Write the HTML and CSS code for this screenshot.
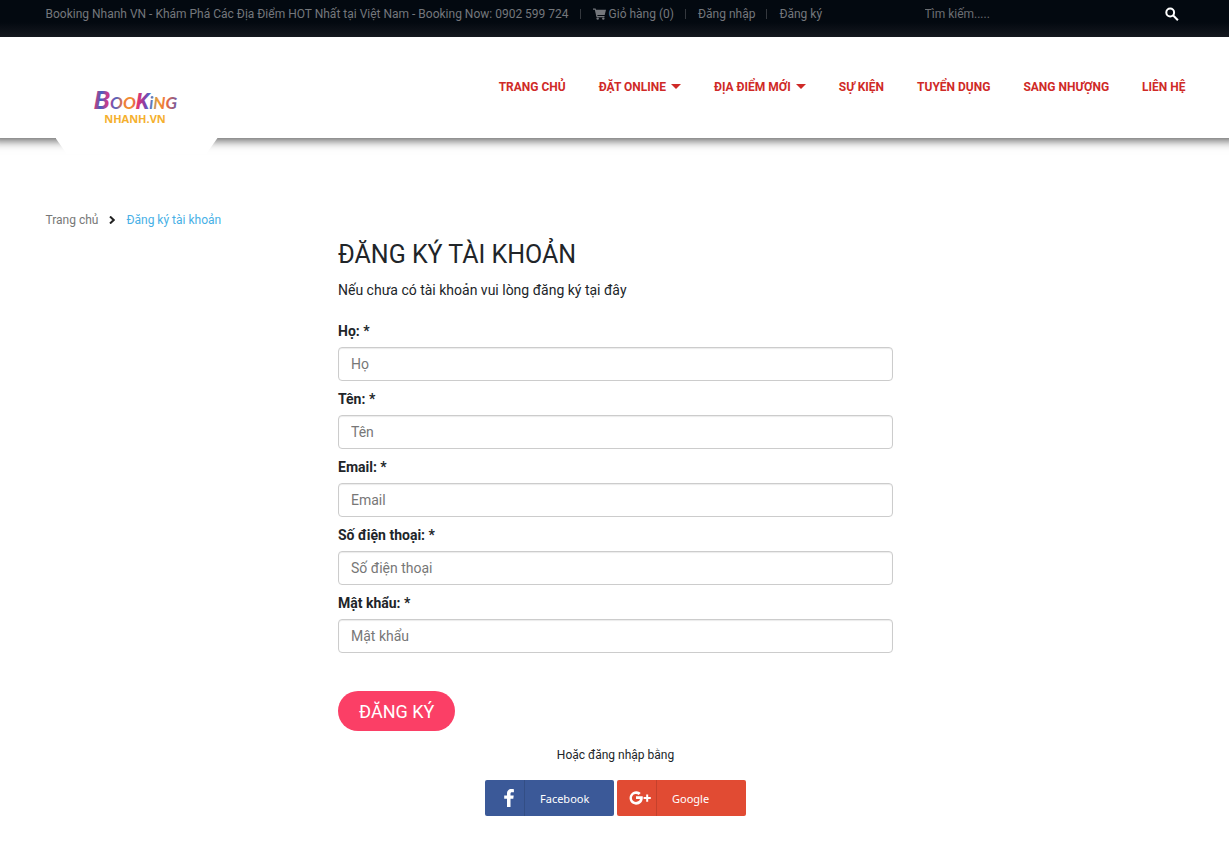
FILE: index.html
```html
<!DOCTYPE html>
<html lang="vi">
<head>
    <meta charset="UTF-8">
    <meta name="viewport" content="width=device-width, initial-scale=1.0">
    <title>Đăng ký tài khoản</title>
    <link rel="stylesheet" href="styles.css">
</head>
<body>
    <div class="topbar">
        <div class="container topbar-inner">
            <div class="topbar-links">
                <span>Booking Nhanh VN - Khám Phá Các Địa Điểm HOT Nhất tại Việt Nam - Booking Now: 0902 599 724</span>
                <a href="#" class="topbar-link">
                    <svg class="cart-icon" viewBox="0 0 13 12" aria-hidden="true">
                        <path d="M0 .5h2.600l.4 1.300H13L11.700 7H4.300l.2 1H11.500v1.200H3.500L1.800 1.800H0z"/>
                        <circle cx="4.700" cy="10.600" r="1.200"/>
                        <circle cx="10.300" cy="10.600" r="1.200"/>
                    </svg>
                    Giỏ hàng (0)
                </a>
                <a href="#" class="topbar-link">Đăng nhập</a>
                <a href="#" class="topbar-link">Đăng ký</a>
            </div>
            <form class="search">
                <input type="text" class="search-input" placeholder="Tìm kiếm....." aria-label="Tìm kiếm">
                <button type="button" class="search-button" aria-label="Tìm kiếm">
                    <svg viewBox="0 0 14 14" aria-hidden="true">
                        <circle cx="5.200" cy="5.500" r="3.900"/>
                        <path d="M8 8.300l4.900 4.900"/>
                    </svg>
                </button>
            </form>
        </div>
    </div>

    <header class="header">
        <div class="container header-inner">
            <a href="#" class="logo" aria-label="Booking Nhanh.vn">
                <svg class="logo-image" viewBox="0 0 90 44">
                    <defs>
                        <linearGradient id="logo-colors" gradientUnits="userSpaceOnUse" x1="3" y1="4" x2="87" y2="10">
                            <stop offset="0" stop-color="#e8356d"/>
                            <stop offset="0.08" stop-color="#3f62c4"/>
                            <stop offset="0.16" stop-color="#d13a86"/>
                            <stop offset="0.26" stop-color="#4b63c4"/>
                            <stop offset="0.34" stop-color="#ee743c"/>
                            <stop offset="0.44" stop-color="#f0952e"/>
                            <stop offset="0.52" stop-color="#e2356f"/>
                            <stop offset="0.6" stop-color="#8a3fa8"/>
                            <stop offset="0.67" stop-color="#3f74d0"/>
                            <stop offset="0.75" stop-color="#f2a12c"/>
                            <stop offset="0.86" stop-color="#ef6b3f"/>
                            <stop offset="1" stop-color="#5b55b5"/>
                        </linearGradient>
                    </defs>
                    <text class="logo-script" x="2" y="27" fill="url(#logo-colors)"><tspan class="logo-initial">B</tspan>OO<tspan class="logo-tall">K</tspan>iNG</text>
                    <text class="logo-name" x="43" y="41" text-anchor="middle">NHANH.VN</text>
                </svg>
            </a>
            <nav class="nav">
                <a href="#">TRANG CHỦ</a>
                <a href="#" class="has-menu">ĐẶT ONLINE</a>
                <a href="#" class="has-menu">ĐỊA ĐIỂM MỚI</a>
                <a href="#">SỰ KIỆN</a>
                <a href="#">TUYỂN DỤNG</a>
                <a href="#">SANG NHƯỢNG</a>
                <a href="#">LIÊN HỆ</a>
            </nav>
        </div>
    </header>

    <main class="container main">
        <nav class="breadcrumb">
            <a href="#">Trang chủ</a>
            <svg class="breadcrumb-arrow" viewBox="0 0 6 8" aria-hidden="true"><path d="M1 0.500L4.700 4L1 7.500"/></svg>
            <span class="current">Đăng ký tài khoản</span>
        </nav>

        <div class="register">
            <h1>ĐĂNG KÝ TÀI KHOẢN</h1>
            <p class="intro">Nếu chưa có tài khoản vui lòng đăng ký tại đây</p>

            <form class="register-form">
                <label for="lastName">Họ: *</label>
                <input type="text" id="lastName" placeholder="Họ">
                <label for="firstName">Tên: *</label>
                <input type="text" id="firstName" placeholder="Tên">
                <label for="email">Email: *</label>
                <input type="email" id="email" placeholder="Email">
                <label for="phone">Số điện thoại: *</label>
                <input type="tel" id="phone" placeholder="Số điện thoại">
                <label for="password">Mật khẩu: *</label>
                <input type="password" id="password" placeholder="Mật khẩu">
                <button type="submit" class="submit-button">ĐĂNG KÝ</button>
            </form>

            <p class="or">Hoặc đăng nhập bằng</p>
            <div class="social">
                <button type="button" class="social-button facebook">
                    <span class="social-icon">
                        <svg viewBox="0 0 24 24" aria-hidden="true"><path d="M10 21v-8.200H7.200V9.500H10V7.300C10 4.500 11.800 3 14.400 3c1.200 0 2.100.1 2.500.2v3h-1.700c-1.400 0-1.700.7-1.700 1.700v1.600h3.200l-.4 3.300h-2.800V21z"/></svg>
                    </span>
                    <span class="social-label">Facebook</span>
                </button>
                <button type="button" class="social-button google">
                    <span class="social-icon">
                        <svg viewBox="0 0 24 24" aria-hidden="true"><path d="M8 10.300v2.800h4c-.4 1.800-1.900 2.800-4 2.800a4 4 0 1 1 2.700-6.900l2-2A6.700 6.700 0 1 0 8 18.700c4.200 0 6.800-3 6.800-7 0-.5 0-1-.1-1.400zM18.200 8.500v2.600h-2.600v2h2.600v2.600h2v-2.600h2.600v-2h-2.600V8.500z"/></svg>
                    </span>
                    <span class="social-label">Google</span>
                </button>
            </div>
        </div>
    </main>
</body>
</html>
```
FILE: styles.css
```css
* {
    margin: 0;
    padding: 0;
    box-sizing: border-box;
    font-family: Roboto, sans-serif;
}

body {
    background: #fff;
    color: #212529;
    font-size: 14px;
    line-height: 20px;
}

a {
    color: inherit;
    text-decoration: none;
}

.container {
    width: 100%;
    max-width: 1170px;
    margin: 0 auto;
    padding: 0 14px 0 16px;
}

/* top bar */
.topbar {
    position: relative;
    background: linear-gradient(#030910 60%, #15181f);
    color: #74777c;
    font-size: 12px;
}

.topbar-inner {
    display: flex;
    justify-content: space-between;
    padding-top: 4px;
    padding-bottom: 13px;
}

.topbar-links {
    display: flex;
    white-space: nowrap;
}

.topbar-link {
    display: flex;
    align-items: center;
}

.topbar-link::before {
    content: "";
    width: 1px;
    height: 10px;
    margin: 0 12px 0 11px;
    background: #34383e;
}

.cart-icon {
    width: 13px;
    height: 12px;
    margin-right: 3px;
    fill: currentColor;
}

.search {
    display: flex;
    width: 261px;
}

.search-input {
    flex: 1;
    min-width: 0;
    border: none;
    outline: none;
    background: transparent;
    color: #fff;
    font-size: 12px;
}

.search-input::placeholder {
    color: #6b6e73;
}

.search-button {
    display: flex;
    align-items: center;
    width: 21px;
    border: none;
    background: transparent;
    cursor: pointer;
}

.search-button svg {
    width: 14px;
    height: 14px;
    fill: none;
    stroke: #fff;
    stroke-width: 2;
}

/* header */
.header {
    background: #fff;
    box-shadow: 0 -8px 10px 10px rgba(0, 0, 0, 0.7);
}

.header-inner {
    display: flex;
    justify-content: space-between;
    align-items: flex-start;
}

.logo {
    position: relative;
    width: 184px;
    height: 101px;
    padding: 45px 0 0 46px;
}

/* tab that hangs below the header and hides its shadow */
.logo::after {
    content: "";
    position: absolute;
    top: 101px;
    left: 10px;
    width: 162px;
    height: 16px;
    background: #fff;
    clip-path: polygon(0 0, 100% 0, 93% 100%, 7% 100%);
}

.logo-image {
    display: block;
    width: 90px;
    height: 44px;
}

.logo-script {
    font-family: Lato, sans-serif;
    font-size: 17px;
    font-style: italic;
    font-weight: 700;
}

.logo-initial {
    font-size: 26px;
}

.logo-tall {
    font-size: 22px;
}

.logo-name {
    fill: #f5b02e;
    font-family: "Open Sans", sans-serif;
    font-size: 11px;
    font-weight: 700;
}

.nav {
    display: flex;
    gap: 33px;
    padding-top: 40px;
    color: #cf2a27;
    font-size: 12px;
    font-weight: 700;
    white-space: nowrap;
}

.has-menu::after {
    content: "";
    display: inline-block;
    margin-left: 5px;
    border: 5px solid transparent;
    border-top-color: currentColor;
    border-bottom: none;
    vertical-align: 2px;
}

/* breadcrumb */
.breadcrumb {
    display: flex;
    align-items: center;
    padding-top: 72px;
    color: #777;
    font-size: 12px;
}

.breadcrumb-arrow {
    width: 6px;
    height: 8px;
    margin: 0 11px;
    fill: none;
    stroke: #222;
    stroke-width: 2;
}

.current {
    color: #47b0e6;
}

/* register form */
.register {
    max-width: 555px;
    margin: 0 auto;
    padding-bottom: 32px;
}

h1 {
    margin-top: 8px;
    font-size: 25px;
    font-weight: 400;
    line-height: 34px;
}

.intro {
    margin-top: 8px;
}

.register-form label {
    display: block;
    padding: 8px 0 6px;
    font-weight: 700;
}

.register-form label:first-child {
    margin-top: 13px;
}

.register-form input {
    display: block;
    width: 100%;
    height: 34px;
    padding: 0 12px;
    border: 1px solid #ccc;
    border-radius: 4px;
    background: #fff;
    box-shadow: inset 0 1px 1px rgba(0, 0, 0, 0.08);
    font-size: 14px;
}

.register-form input::placeholder {
    color: #777;
}

.submit-button {
    height: 40px;
    margin-top: 38px;
    padding: 0 21px;
    border: none;
    border-radius: 20px;
    background: #fb3f66;
    color: #fff;
    font-size: 18px;
    cursor: pointer;
}

.or {
    margin-top: 14px;
    font-size: 12px;
    text-align: center;
}

.social {
    display: flex;
    justify-content: center;
    gap: 3px;
    margin-top: 15px;
}

.social-button {
    display: flex;
    align-items: center;
    width: 129px;
    height: 36px;
    border: none;
    border-radius: 2px;
    color: #fff;
    font-size: 12px;
    cursor: pointer;
}

.facebook {
    background: #3b5998;
}

.google {
    background: #e14b33;
}

.social-icon {
    display: flex;
    align-items: center;
    justify-content: center;
    width: 40px;
    height: 36px;
    border-right: 1px solid rgba(0, 0, 0, 0.12);
}

.facebook .social-icon {
    padding-left: 8px;
}

.google .social-icon {
    padding-left: 6px;
}

.social-icon svg {
    width: 24px;
    height: 24px;
    fill: #fff;
}

.social-label {
    padding-left: 15px;
    font-family: "Noto Sans", sans-serif;
    font-size: 11px;
}

@media (max-width: 1100px) {
    .topbar-inner,
    .topbar-links,
    .nav {
        flex-wrap: wrap;
    }
}
```
